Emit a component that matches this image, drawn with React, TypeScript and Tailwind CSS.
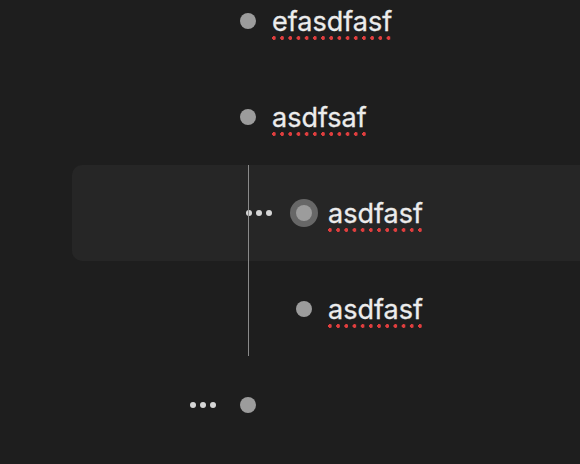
type Item = {
  id: string;
  text?: string;
  level: number;
  active?: boolean;
  dots?: boolean;
  children?: Item[];
};

const ITEMS: Item[] = [
  { id: '1', text: 'efasdfasf', level: 0 },
  {
    id: '2',
    text: 'asdfsaf',
    level: 0,
    children: [
      { id: '3', text: 'asdfasf', level: 1, active: true, dots: true },
      { id: '4', text: 'asdfasf', level: 1 },
    ],
  },
  { id: '5', level: 0, dots: true },
];

const Dots = ({ show }: { show?: boolean }) => (
  <div className="flex w-[26px] items-center gap-[4.5px] mr-[18px]">
    {show && (
      <>
        <span className="h-[5.5px] w-[5.5px] rounded-full bg-[#d6d6d6]" />
        <span className="h-[5.5px] w-[5.5px] rounded-full bg-[#d6d6d6]" />
        <span className="h-[5.5px] w-[5.5px] rounded-full bg-[#d6d6d6]" />
      </>
    )}
  </div>
);

const Bullet = ({ active }: { active?: boolean }) => (
  <div className="flex h-[28px] w-[28px] items-center justify-center">
    {active ? (
      <div className="flex h-[28px] w-[28px] items-center justify-center rounded-full bg-[#676767]">
        <div className="h-[16px] w-[16px] rounded-full bg-[#9c9c9c]" />
      </div>
    ) : (
      <div className="h-[16px] w-[16px] rounded-full bg-[#9c9c9c]" />
    )}
  </div>
);

const Row = ({ item }: { item: Item }) => (
  <div
    className={
      'flex h-[96px] w-[540px] items-center rounded-[10px] ' +
      (item.level === 1 ? 'pl-[174px] ' : 'pl-[118px] ') +
      (item.active ? 'bg-[#262626]' : '')
    }
  >
    <Dots show={item.dots} />
    <Bullet active={item.active} />
    {item.text && (
      <span className="ml-[10px] mt-[3px] inline-block bg-[radial-gradient(circle_at_2px_2px,#e03e3e_1.7px,transparent_2.1px)] bg-[length:8.2px_4px] bg-bottom-left bg-repeat-x pb-[2px] text-[27px] leading-[32px] text-[#ececec] [-webkit-text-stroke:0.3px_#ececec]">
        {item.text}
      </span>
    )}
  </div>
);

const Node = ({ item }: { item: Item }) => (
  <div>
    <Row item={item} />
    {item.children && (
      <div className="relative">
        {item.children.map((child) => (
          <Node key={child.id} item={child} />
        ))}
        <div className="absolute top-0 bottom-[1px] left-[176px] w-px bg-[#8a8a8a]" />
      </div>
    )}
  </div>
);

export default function App() {
  return (
    <div
      className="h-[464px] w-[580px] overflow-hidden bg-[#1e1e1e] pl-[72px]"
      style={{ fontFamily: 'Inter, "Noto Sans", sans-serif' }}
    >
      <div className="-mt-[27px]">
        {ITEMS.map((item) => (
          <Node key={item.id} item={item} />
        ))}
      </div>
    </div>
  );
}
